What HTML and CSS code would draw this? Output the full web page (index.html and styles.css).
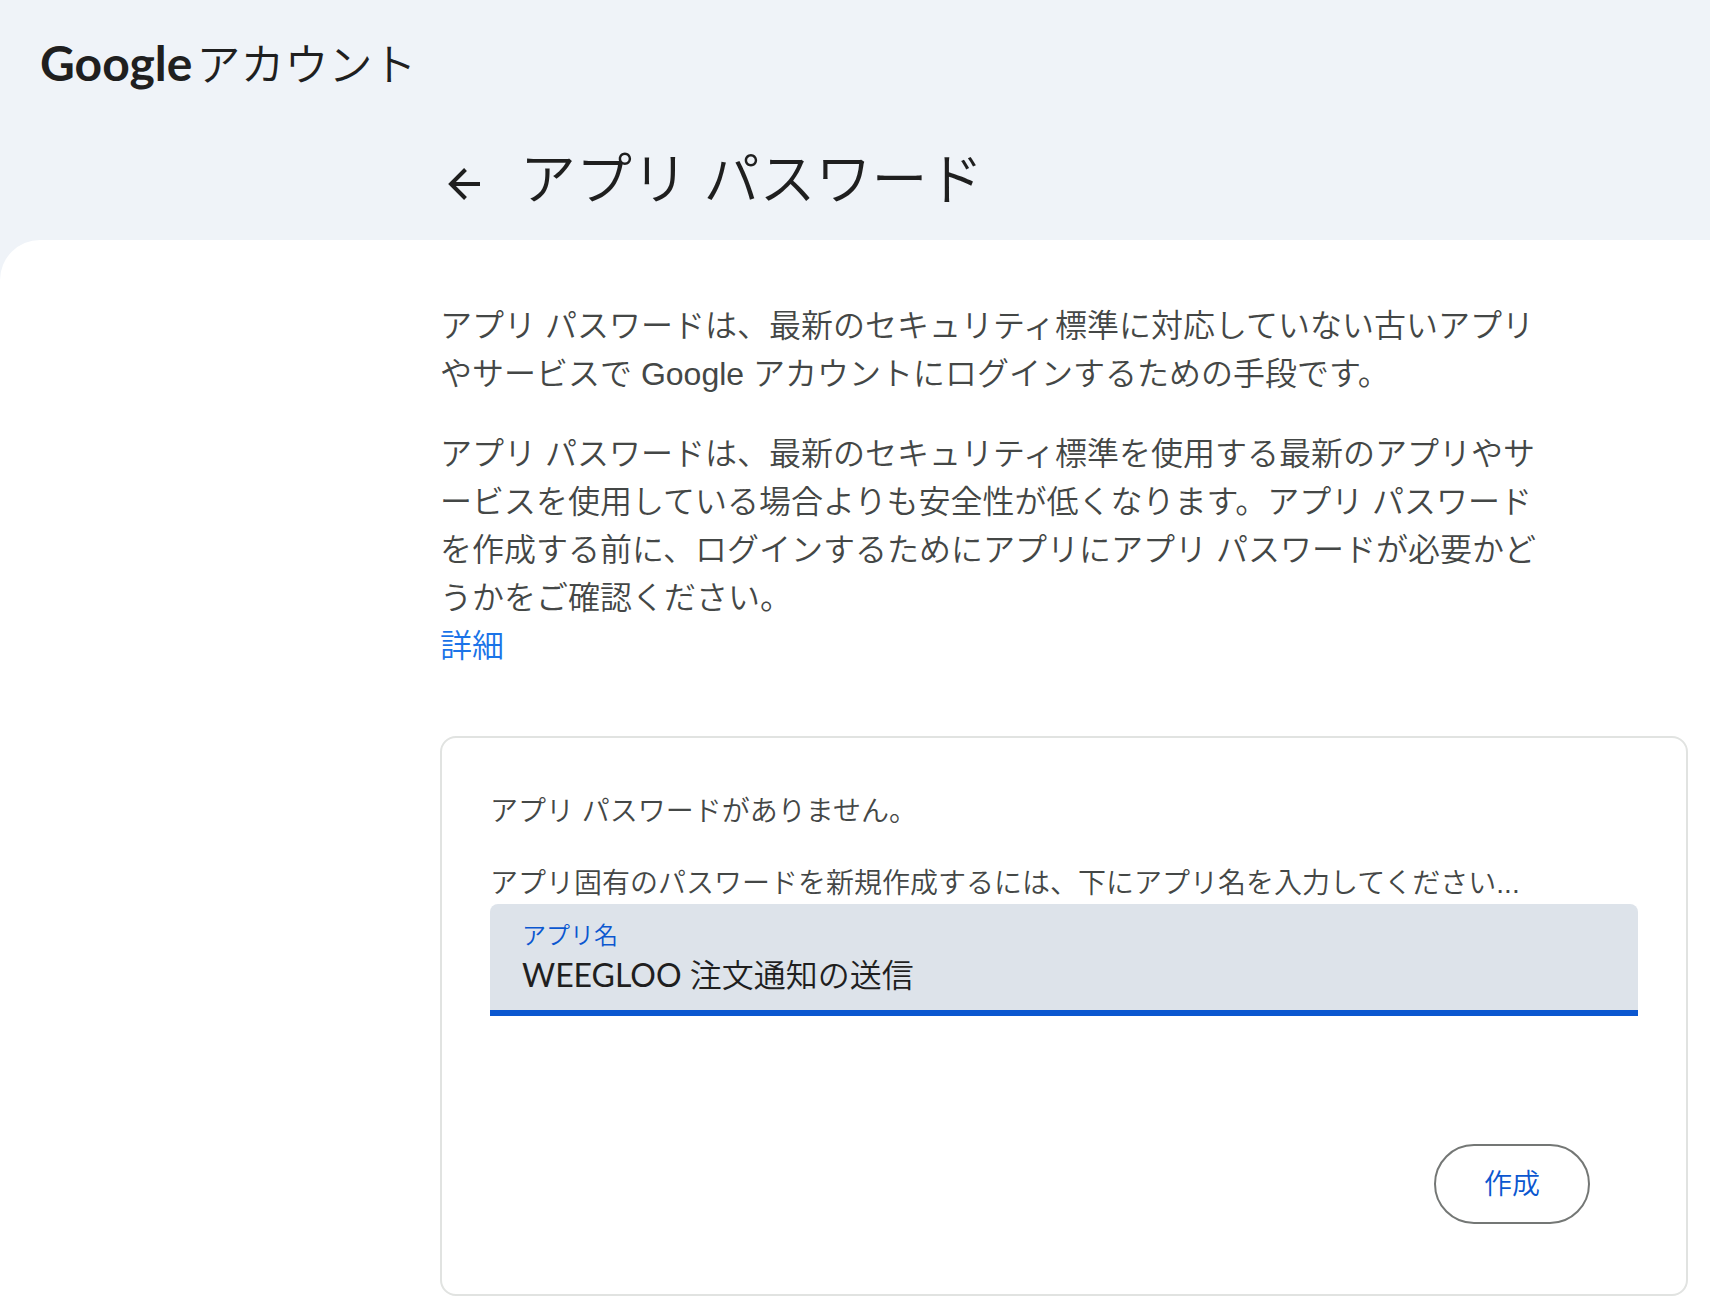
FILE: index.html
```html
<!DOCTYPE html>
<html lang="ja">

<head>
    <meta charset="UTF-8">
    <meta name="viewport" content="width=device-width, initial-scale=1.0">
    <title>アプリ パスワード</title>

    <link rel="stylesheet" href="styles.css">
</head>

<body>

    <header class="page-header">
        <a class="brand" href="#"><span class="brand-logo">Google</span><span class="brand-product">アカウント</span></a>

        <div class="title-bar">
            <button class="back-button" type="button" aria-label="戻る">
                <svg width="32" height="32" viewBox="0 0 32 32" fill="none" stroke="currentColor" stroke-width="4">
                    <path d="M32 16H3M17.500 1.500L3 16l14.500 14.500" />
                </svg>
            </button>
            <h1 class="page-title">アプリ パスワード</h1>
        </div>
    </header>

    <main class="content">
        <div class="intro">
            <p>アプリ パスワードは、最新のセキュリティ標準に対応していない古いアプリやサービスで Google アカウントにログインするための手段です。</p>
            <p>アプリ パスワードは、最新のセキュリティ標準を使用する最新のアプリやサービスを使用している場合よりも安全性が低くなります。アプリ パスワードを作成する前に、ログインするためにアプリにアプリ パスワードが必要かどうかをご確認ください。<br><a href="#">詳細</a></p>
        </div>

        <form class="card">
            <p class="card-text">アプリ パスワードがありません。</p>
            <p class="card-text">アプリ固有のパスワードを新規作成するには、下にアプリ名を入力してください...</p>

            <div class="field">
                <label for="app-name">アプリ名</label>
                <input type="text" id="app-name" name="app-name" value="WEEGLOO 注文通知の送信">
            </div>

            <div class="card-actions">
                <button class="create-button" type="button">作成</button>
            </div>
        </form>
    </main>

</body>

</html>
```
FILE: styles.css
```css
* {
    box-sizing: border-box;
}

body {
    margin: 0;
    background-color: #eff3f8;
    color: #1f1f1f;
    font-family: "Liberation Sans", "Noto Sans CJK JP DemiLight", "Noto Sans CJK JP", sans-serif;
    font-weight: 400;
}

h1,
p {
    margin: 0;
    font-weight: inherit;
}

/* Header */
.page-header {
    padding: 31px 24px 20px 40px;
}

.brand {
    display: flex;
    align-items: baseline;
    gap: 4px;
    height: 64px;
    line-height: 64px;
    color: inherit;
    text-decoration: none;
}

.brand-logo {
    font-family: Lato, sans-serif;
    font-size: 48px;
    font-weight: 700;
}

.brand-product {
    font-size: 44px;
}

.title-bar {
    display: flex;
    align-items: center;
    gap: 40px;
    margin-top: 45px;
    padding-left: 408px;
}

.back-button {
    display: flex;
    padding: 8px 0 0;
    border: none;
    background: none;
    color: inherit;
    cursor: pointer;
}

.page-title {
    font-size: 56px;
    line-height: 80px;
}

/* White content sheet */
.content {
    padding: 62px 22px 8px 440px;
    border-top-left-radius: 40px;
    background-color: #fff;
}

.intro {
    display: flex;
    flex-direction: column;
    gap: 32px;
    max-width: 1100px;
    color: #444746;
    font-size: 32px;
    line-height: 48px;
}

.intro a {
    color: #1a73e8;
    text-decoration: none;
}

/* Card */
.card {
    margin-top: 66px;
    padding: 54px 48px 70px;
    border: 2px solid #e1e3e1;
    border-radius: 16px;
}

.card-text {
    margin-bottom: 32px;
    color: #444746;
    font-size: 28px;
    line-height: 40px;
}

.card-text + .card-text {
    margin-bottom: 0;
}

.field {
    display: flex;
    flex-direction: column;
    padding: 16px 32px 16px;
    border-bottom: 6px solid #0b57d0;
    border-radius: 8px 8px 0 0;
    background-color: #dde3ea;
}

.field label {
    color: #0b57d0;
    font-size: 24px;
    line-height: 32px;
}

.field input {
    width: 100%;
    height: 42px;
    padding: 0;
    border: none;
    outline: none;
    background: none;
    color: #1f1f1f;
    font-family: Lato, "Noto Sans CJK JP DemiLight", "Noto Sans CJK JP", sans-serif;
    font-size: 32px;
}

.card-actions {
    display: flex;
    justify-content: flex-end;
    margin-top: 128px;
    padding-right: 48px;
}

.create-button {
    height: 80px;
    padding: 0 48px 4px;
    border: 2px solid #747775;
    border-radius: 40px;
    background-color: #fff;
    color: #0b57d0;
    font-family: inherit;
    font-size: 28px;
    cursor: pointer;
}
```
